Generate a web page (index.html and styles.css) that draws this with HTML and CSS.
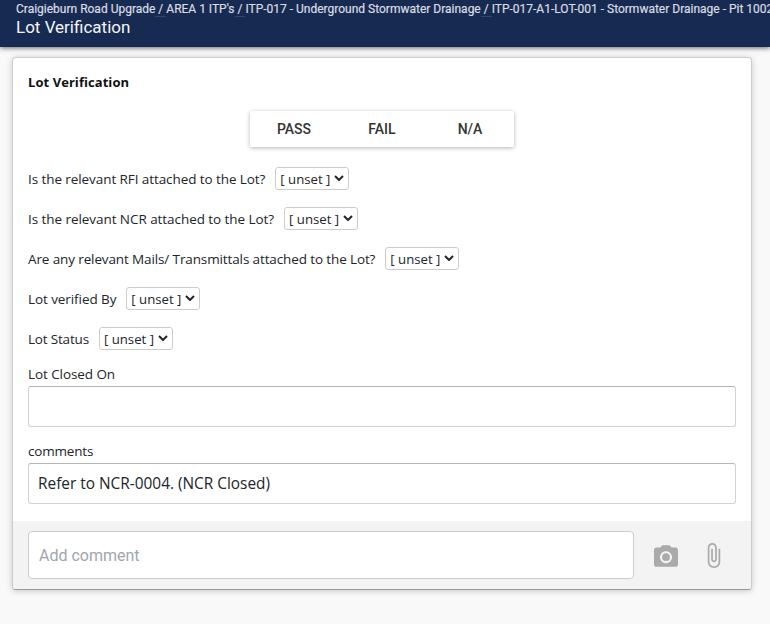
FILE: index.html
```html
<!DOCTYPE html>
<html lang="en">
<head>
<meta charset="utf-8">
<title>Lot Verification</title>
<link rel="stylesheet" href="styles.css">
</head>
<body>
<header class="topbar">
  <nav class="crumbs"><span>Craigieburn Road Upgrade</span><i class="sep"> / </i><span>AREA 1 ITP's</span><i class="sep"> / </i><span>ITP-017 - Underground Stormwater Drainage</span><i class="sep"> / </i><span>ITP-017-A1-LOT-001 - Stormwater Drainage - Pit 1002</span></nav>
  <h1 class="title">Lot Verification</h1>
</header>
<main class="card">
  <section class="form">
    <h2 class="heading">Lot Verification</h2>
    <div class="result"><button>PASS</button><button>FAIL</button><button>N/A</button></div>
    <div class="row"><label class="q-rfi">Is the relevant RFI attached to the Lot?</label><span class="pick"><select><option>[ unset ]</option></select><svg viewBox="0 0 10 6"><path d="M1 1l4 4 4-4"/></svg></span></div>
    <div class="row"><label class="q-ncr">Is the relevant NCR attached to the Lot?</label><span class="pick"><select><option>[ unset ]</option></select><svg viewBox="0 0 10 6"><path d="M1 1l4 4 4-4"/></svg></span></div>
    <div class="row"><label class="q-mail">Are any relevant Mails/ Transmittals attached to the Lot?</label><span class="pick"><select><option>[ unset ]</option></select><svg viewBox="0 0 10 6"><path d="M1 1l4 4 4-4"/></svg></span></div>
    <div class="row"><label class="q-by">Lot verified By</label><span class="pick"><select><option>[ unset ]</option></select><svg viewBox="0 0 10 6"><path d="M1 1l4 4 4-4"/></svg></span></div>
    <div class="row"><label class="q-status">Lot Status</label><span class="pick"><select><option>[ unset ]</option></select><svg viewBox="0 0 10 6"><path d="M1 1l4 4 4-4"/></svg></span></div>
    <div class="field"><label class="q-closed">Lot Closed On</label><input type="text"></div>
    <div class="field"><label class="q-comments">comments</label><input type="text" value="Refer to NCR-0004. (NCR Closed)"></div>
  </section>
  <footer class="composer">
    <input type="text" placeholder="Add comment">
    <svg class="camera" viewBox="2 2 20 18"><circle cx="12" cy="12" r="3.2"/><path d="M9 2L7.17 4H4c-1.1 0-2 .9-2 2v12c0 1.1.9 2 2 2h16c1.1 0 2-.9 2-2V6c0-1.1-.9-2-2-2h-3.17L15 2H9zm3 15c-2.76 0-5-2.24-5-5s2.24-5 5-5 5 2.24 5 5-2.24 5-5 5z"/></svg>
    <svg class="clip" viewBox="7 1 11 22"><path d="M16.5 6v11.5c0 2.21-1.79 4-4 4s-4-1.790-4-4V5c0-1.380 1.120-2.500 2.500-2.500s2.500 1.120 2.500 2.500v10.500c0 .55-.45 1-1 1s-1-.45-1-1V6H10v9.500c0 1.380 1.120 2.500 2.500 2.500s2.500-1.120 2.500-2.500V5c0-2.210-1.790-4-4-4S7 2.790 7 5v12.500c0 3.040 2.460 5.500 5.500 5.500s5.500-2.460 5.500-5.500V6h-1.500z"/></svg>
  </footer>
</main>
</body>
</html>
```
FILE: styles.css
```css
* { box-sizing: border-box; }
body { margin: 0; height: 624px; overflow: hidden; background: #f9f9f9; color: #212529; font: 14px/20px "Open Sans", sans-serif; }
.topbar { height: 47px; padding: 2px 0 0 16px; background: #172b52; box-shadow: 0 1px 5px rgba(0,0,0,.6); font-family: Roboto, sans-serif; }
.crumbs { white-space: pre; font-size: 12px; line-height: 15px; color: #d9dce3; -webkit-text-stroke: .2px #d9dce3; }
.sep { font-style: normal; border-bottom: 1px solid #31427d; }
.title { margin: 0; font-size: 17px; line-height: 20px; font-weight: 400; color: #f4f5f7; }
.card { width: 740px; height: 533px; margin: 10px 0 0 12px; border: 1px solid #ccc; border-bottom-color: #999; border-radius: 4px; background: #fff; box-shadow: 0 1px 6px rgba(0,0,0,.2); overflow: hidden; }
.form { height: 463px; padding: 14px 15px 0; display: flex; flex-direction: column; }
.form > * { flex-shrink: 0; }
.heading { margin: 0; font-size: 13px; line-height: 20px; font-weight: 700; letter-spacing: .06px; color: #111; }
.result { display: flex; width: 264px; height: 36px; margin: 19px 0 12px 222px; border-radius: 2px; box-shadow: 0 1px 4px rgba(0,0,0,.3); }
.result button { flex: 1; padding: 0 0 1px; border: 0; border-radius: 2px; background: #fff; font: 500 14px Roboto, sans-serif; color: #333; }
.row { display: flex; align-items: center; gap: 10px; height: 40px; white-space: nowrap; }
.row label, .field label { font-size: 13.5px; letter-spacing: -.08px; }
.row .q-ncr { letter-spacing: -.06px; }
.row .q-mail { letter-spacing: -.12px; }
.row .q-status, .field .q-comments { letter-spacing: -.18px; }
.pick { display: grid; width: 74px; height: 23px; margin-bottom: 2px; align-items: center; }
.pick select, .pick svg { grid-area: 1 / 1; }
.pick select { appearance: none; width: 74px; height: 23px; padding: 1px 0 0 4px; border: 1px solid #ccc; border-radius: 3px; background: #fff; color: #212529; font: 13.2px "Open Sans", sans-serif; }
.pick svg { width: 10px; height: 6px; justify-self: end; margin: 0 5px 1px 0; fill: none; stroke: #212529; stroke-width: 2; pointer-events: none; }
.field { display: flex; flex-direction: column; height: 77px; padding-top: 5px; }
.field label { line-height: 20px; height: 22px; }
.field input { height: 41px; padding: 0 9px; border: 1px solid #d2d2d2; border-top-color: #b5b5b5; border-radius: 3px; color: #212529; font: 15.4px "Open Sans", sans-serif; }
.composer { display: flex; align-items: center; height: 68px; padding: 0 30px 0 15px; background: #f3f3f3; }
.composer input { width: 606px; height: 48px; padding: 0 10px; border: 1px solid #ccc; border-radius: 4px; background: #fff; font: 16px Roboto, sans-serif; }
.composer input::placeholder { color: #a1a5ad; }
.composer svg { fill: #aaa; }
.camera { width: 24px; height: 22px; margin: 1px 0 0 20px; }
.clip { width: 14px; height: 25px; margin-left: 29px; }
```
